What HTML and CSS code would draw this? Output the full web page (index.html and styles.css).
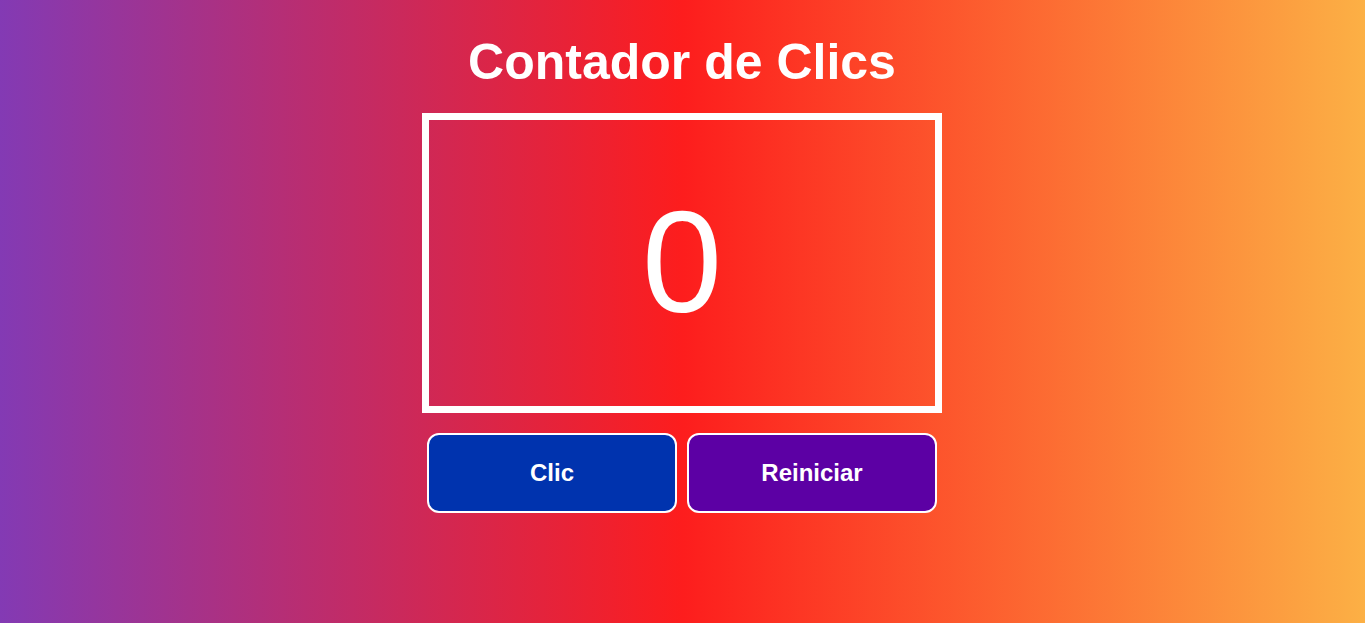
FILE: index.html
```html
<!DOCTYPE html>
<html lang="es">
<head>
<meta charset="utf-8">
<title>Contador de Clics</title>
<link rel="stylesheet" href="styles.css">
</head>
<body>
<main class="app">
  <h1 class="title">Contador de Clics</h1>
  <div class="counter"><span class="count">0</span></div>
  <div class="actions">
    <button class="btn btn-click" type="button">Clic</button>
    <button class="btn btn-reset" type="button">Reiniciar</button>
  </div>
</main>
</body>
</html>
```
FILE: styles.css
```css
html, body {
  margin: 0;
  padding: 0;
  height: 100%;
}
body {
  background: linear-gradient(to right, #833ab4, #fd1d1d, #fcb045);
  font-family: "Liberation Sans", Arial, sans-serif;
  color: #fff;
}
.app {
  display: flex;
  flex-direction: column;
  align-items: center;
  padding-top: 34px;
  padding-right: 1px;
}
.title {
  margin: 0 0 22px;
  font-size: 50px;
  font-weight: bold;
  line-height: 57px;
}
.counter {
  box-sizing: border-box;
  width: 520px;
  height: 300px;
  border: 7px solid #fff;
  display: flex;
  align-items: center;
  justify-content: center;
}
.count {
  font-size: 144px;
  line-height: 1;
}
.actions {
  display: flex;
  gap: 10px;
  margin-top: 20px;
}
.btn {
  box-sizing: border-box;
  width: 250px;
  height: 80px;
  border: 2px solid #fff;
  border-radius: 12px;
  color: #fff;
  font-family: "Liberation Sans", Arial, sans-serif;
  font-size: 24px;
  font-weight: bold;
  cursor: pointer;
}
.btn-click {
  background: #0033ae;
}
.btn-reset {
  background: #5c00a4;
}
```
